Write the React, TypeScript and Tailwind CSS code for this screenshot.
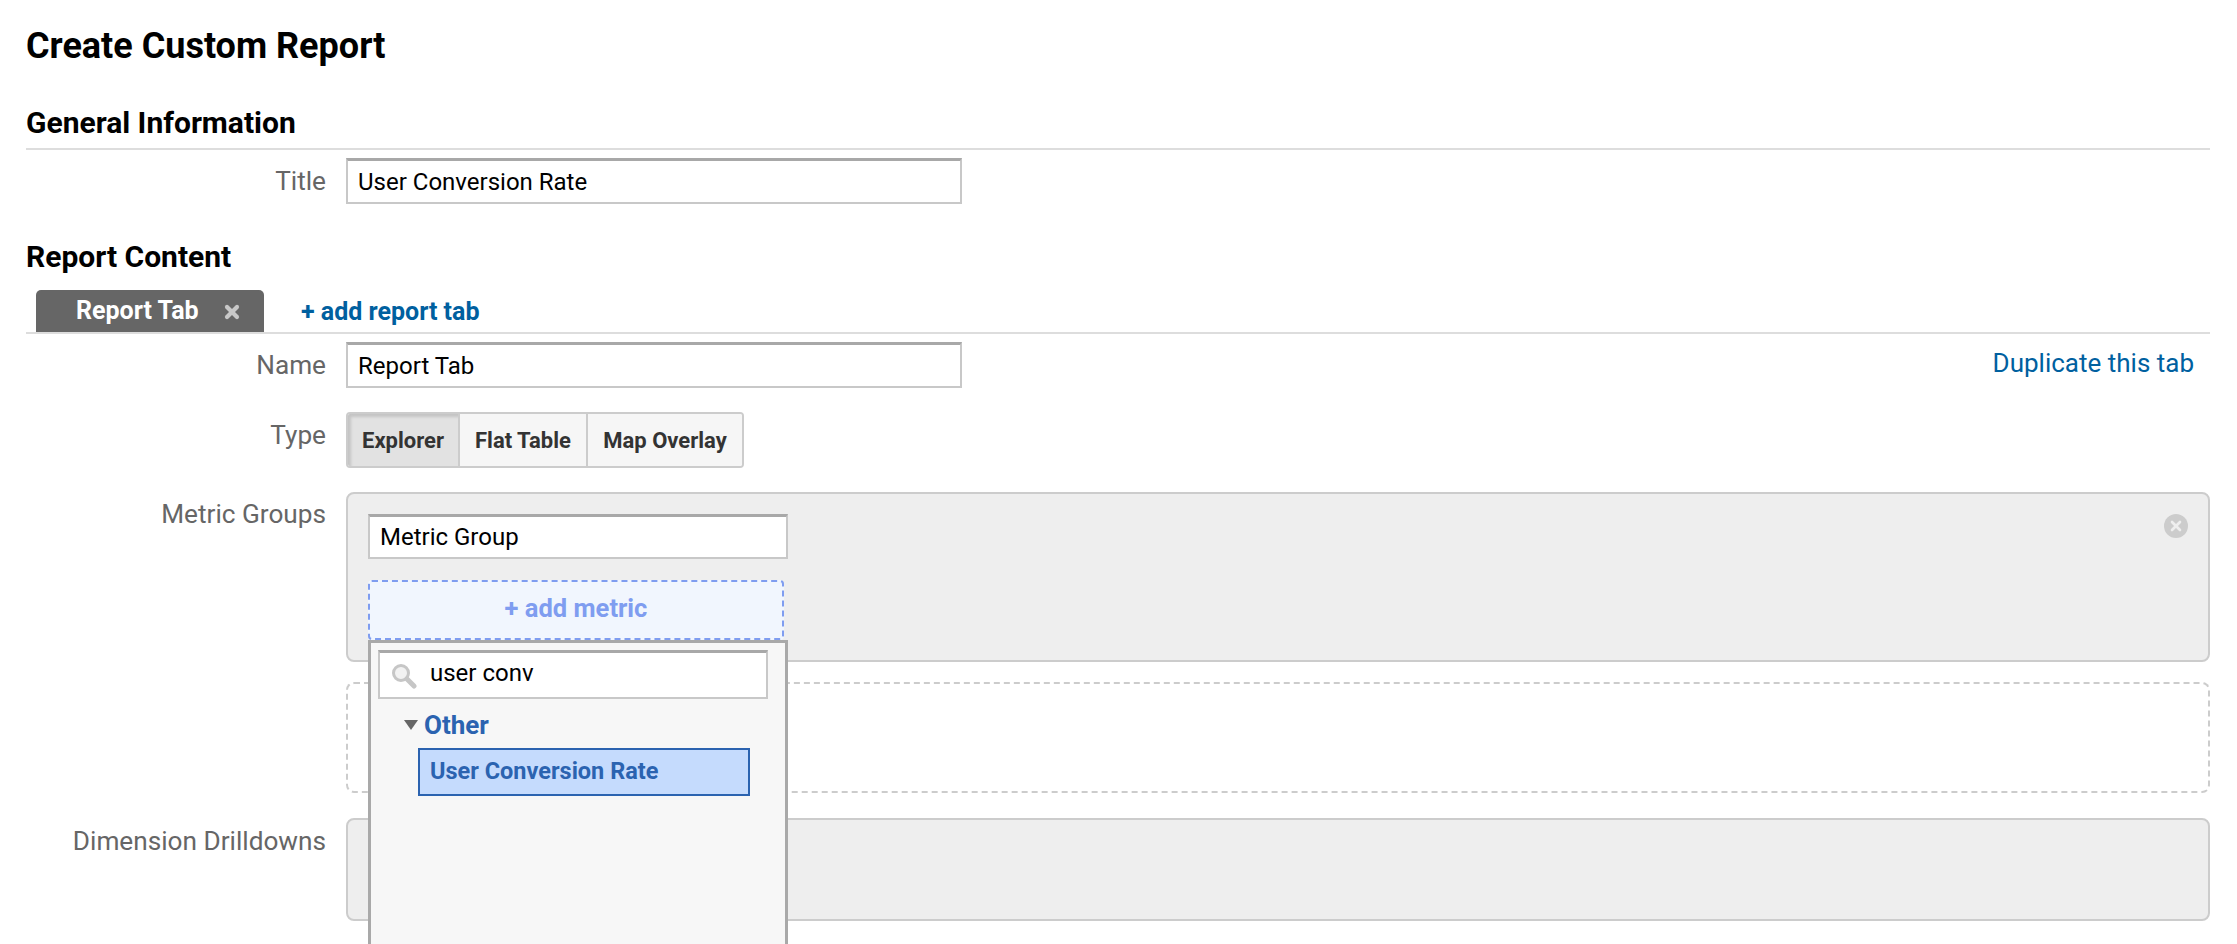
import { X } from "lucide-react";

function TextBox({ value, className }: { value: string; className: string }) {
  return (
    <div
      className={`flex items-center border-2 border-t-[3px] border-[#c8c8c8] border-t-[#a8a8a8] bg-white pl-[10px] text-[24px] text-black ${className}`}
    >
      {value}
    </div>
  );
}

function FieldLabel({ children, className }: { children: string; className: string }) {
  return <div className={`w-[300px] shrink-0 text-right text-[26.2px] leading-[30px] text-[#666] ${className}`}>{children}</div>;
}

function MetricPicker() {
  return (
    <div className="absolute top-[146px] left-[20px] h-[400px] w-[420px] border-[3px] border-[#a9a9a9] bg-[#f7f7f7] pt-[7px] pl-[7px]">
      <div className="flex h-[49px] w-[390px] items-center border-2 border-t-[3px] border-[#c8c8c8] border-t-[#a8a8a8] bg-white pb-[5px] pl-[11px] text-[24px] text-black">
        <svg width="26" height="26" viewBox="0 0 26 26" fill="none" className="mt-[6px] mr-[13px]">
          <circle cx="10" cy="10" r="7.5" stroke="#c6c6c6" strokeWidth="3" fill="#f2f2f2" />
          <path d="M16 16l7 7" stroke="#c6c6c6" strokeWidth="5" strokeLinecap="round" />
        </svg>
        user conv
      </div>
      <div className="mt-[10px] flex items-center pl-[26px] text-[26px] leading-[32px] font-bold text-[#2b63b0]">
        <svg width="14" height="10" viewBox="0 0 14 10" className="mr-[6px]">
          <path d="M0 0h14L7 10z" fill="#666" />
        </svg>
        Other
      </div>
      <div className="mt-[7px] ml-[40px] flex h-[48px] w-[332px] items-center border-2 border-[#2b63b0] bg-[#c5dbfd] pl-[10px] text-[23.5px] font-bold text-[#2b63b0]">
        User Conversion Rate
      </div>
    </div>
  );
}

export default function App() {
  return (
    <div className="h-[944px] w-[2237px] overflow-hidden bg-white pr-[27px] pl-[26px] font-['Roboto',sans-serif]">
      <h1 className="pt-[24px] text-[36px] leading-[44px] font-bold text-black">Create Custom Report</h1>

      <h2 className="mt-[37px] text-[30px] leading-[36px] font-bold text-black">General Information</h2>
      <div className="mt-[7px] h-[2px] bg-[#ddd]" />
      <div className="mt-[8px] flex gap-[20px]">
        <FieldLabel className="pt-[8px]">Title</FieldLabel>
        <TextBox value="User Conversion Rate" className="h-[46px] w-[616px]" />
      </div>

      <h2 className="mt-[35px] text-[30px] leading-[36px] font-bold text-black">Report Content</h2>
      <div className="mt-[15px] flex h-[42px] items-center pl-[10px]">
        <div className="flex h-full w-[228px] items-center rounded-t-[5px] bg-[#666] pl-[40px] text-[25px] font-bold text-white">
          Report Tab
          <X className="ml-[23px] mt-[2px] h-[20px] w-[20px] text-[#c8c8c8]" strokeWidth={5} />
        </div>
        <div className="ml-[37px] pt-[1px] text-[25px] font-bold text-[#00609f]">+ add report tab</div>
      </div>
      <div className="h-[2px] bg-[#ddd]" />

      <div className="mt-[8px] flex gap-[20px]">
        <FieldLabel className="pt-[8px]">Name</FieldLabel>
        <TextBox value="Report Tab" className="h-[46px] w-[616px]" />
        <div className="mt-[3px] mr-[16px] ml-auto text-[26px] leading-[36px] text-[#00609f]">Duplicate this tab</div>
      </div>

      <div className="mt-[24px] flex gap-[20px]">
        <FieldLabel className="pt-[8px]">Type</FieldLabel>
        <div className="flex h-[56px] overflow-hidden rounded-[4px] border-2 border-[#ccc] text-[22px] font-bold text-[#333]">
          <div className="flex w-[112px] items-center justify-center border-r-2 border-[#ccc] bg-[#e2e2e2] shadow-[inset_3px_3px_3px_#c4c4c4]">Explorer</div>
          <div className="flex w-[128px] items-center justify-center border-r-2 border-[#ccc] bg-[#f6f6f6]">Flat Table</div>
          <div className="flex w-[154px] items-center justify-center bg-[#f6f6f6]">Map Overlay</div>
        </div>
      </div>

      <div className="mt-[24px] flex gap-[20px]">
        <FieldLabel className="pt-[7px]">Metric Groups</FieldLabel>
        <div className="flex flex-1 flex-col gap-[20px]">
          <div className="relative h-[170px] rounded-[8px] border-2 border-[#ccc] bg-[#eee] pt-[20px] pl-[20px]">
            <TextBox value="Metric Group" className="h-[45px] w-[420px]" />
            <div className="mt-[21px] flex h-[60px] w-[416px] items-center justify-center rounded-[4px] border-2 border-dashed border-[#7f9df0] bg-[#f1f6fe] pb-[4px] text-[25.5px] font-bold text-[#7f9df0]">
              + add metric
            </div>
            <MetricPicker />
            <div className="absolute top-[20px] right-[20px] flex h-[24px] w-[24px] items-center justify-center rounded-full bg-[#ccc]">
              <X className="h-[16px] w-[16px] text-[#eee]" strokeWidth={4} />
            </div>
          </div>
          <div className="h-[111px] rounded-[8px] border-2 border-dashed border-[#ccc] bg-white" />
        </div>
      </div>

      <div className="mt-[25px] flex gap-[20px]">
        <FieldLabel className="pt-[8px]">Dimension Drilldowns</FieldLabel>
        <div className="h-[103px] flex-1 rounded-[8px] border-2 border-[#ccc] bg-[#eee]" />
      </div>
    </div>
  );
}
